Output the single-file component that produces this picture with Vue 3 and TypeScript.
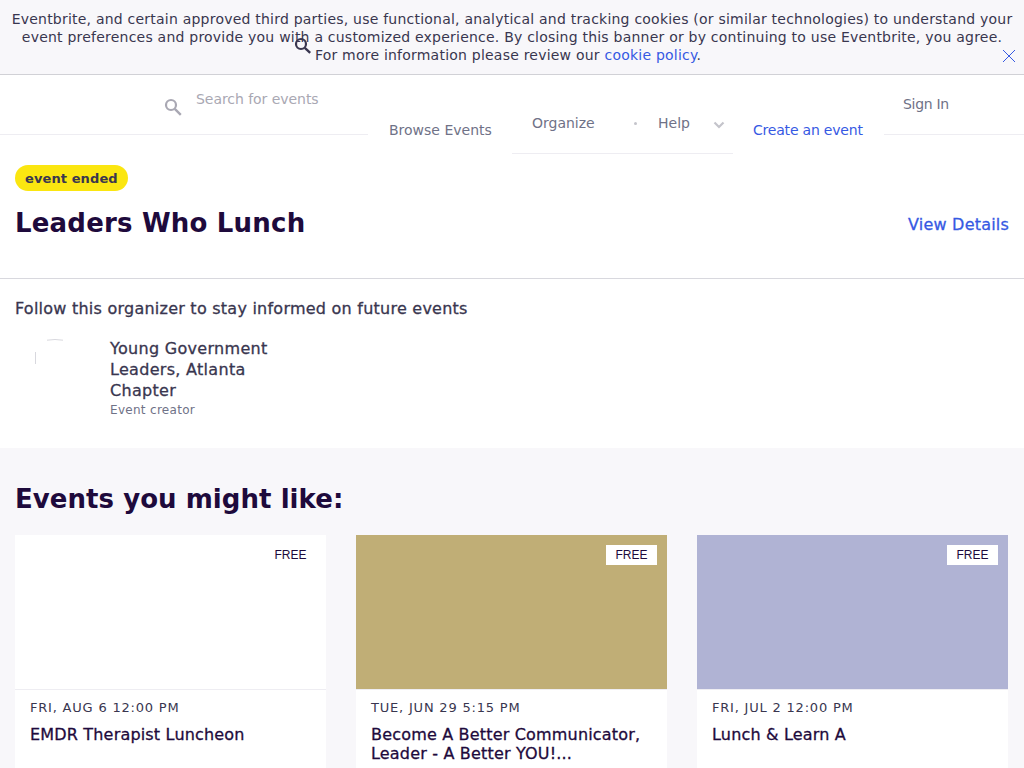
<script setup lang="ts">
interface EventCard {
  date: string
  title: string
  color: string
}

const cards: EventCard[] = [
  { date: 'FRI, AUG 6 12:00 PM', title: 'EMDR Therapist Luncheon', color: '#ffffff' },
  { date: 'TUE, JUN 29 5:15 PM', title: 'Become A Better Communicator, Leader - A Better YOU!...', color: '#c0ae76' },
  { date: 'FRI, JUL 2 12:00 PM', title: 'Lunch & Learn A', color: '#b0b3d4' }
]
</script>

<template>
  <div class="page">
    <div class="banner">
      <p>
        Eventbrite, and certain approved third parties, use functional, analytical and tracking cookies (or similar technologies) to understand your
        event preferences and provide you with a customized experience. By closing this banner or by continuing to use Eventbrite, you agree.
        For more information please review our <a class="link">cookie policy</a>.<span class="trail"></span>
      </p>
      <svg class="close" width="14" height="14" viewBox="0 0 14 14">
        <path d="M1 1l12 12M13 1L1 13" stroke="#3659e3" stroke-width="1" fill="none" />
      </svg>
      <svg class="stray-search" width="18" height="18" viewBox="0 0 18 18">
        <circle cx="7" cy="7" r="5" stroke="#39364f" stroke-width="2.2" fill="none" />
        <path d="M10.800 10.800l5.400 5" stroke="#39364f" stroke-width="2.4" fill="none" />
      </svg>
    </div>

    <header class="header">
      <div class="search">
        <svg class="search-icon" width="18" height="18" viewBox="0 0 18 18">
          <circle cx="7" cy="7" r="5" stroke="#a9a8b3" stroke-width="2.200" fill="none" />
          <path d="M10.800 10.800l6 6" stroke="#a9a8b3" stroke-width="2.400" fill="none" />
        </svg>
        <span class="search-text">Search for events</span>
      </div>
      <a class="nav browse">Browse Events</a>
      <div class="nav-group">
        <a class="nav organize">Organize</a>
        <span class="dot"></span>
        <a class="nav help">Help</a>
        <svg class="chevron" width="12" height="8" viewBox="0 0 12 8">
          <path d="M1.500 1.500L6 6l4.500-4.500" stroke="#c4c4cb" stroke-width="2.200" fill="none" />
        </svg>
      </div>
      <a class="nav create">Create an event</a>
      <a class="nav signin">Sign In</a>
    </header>

    <section class="hero">
      <span class="badge">event ended</span>
      <div class="title-row">
        <h1>Leaders Who Lunch</h1>
        <a class="details">View Details</a>
      </div>
    </section>

    <section class="organizer">
      <h2>Follow this organizer to stay informed on future events</h2>
      <div class="org-row">
        <svg class="avatar" width="40" height="40" viewBox="0 0 40 40">
          <path d="M12 1.200Q20 -.2 28 1.200" stroke="#d8d8de" fill="none" />
          <path d="M.5 13V25" stroke="#d8d8de" fill="none" />
        </svg>
        <div class="org-info">
          <div class="org-name">Young Government Leaders, Atlanta Chapter</div>
          <div class="org-role">Event creator</div>
        </div>
      </div>
    </section>

    <section class="more">
      <h2>Events you might like:</h2>
      <div class="cards">
        <article v-for="card in cards" :key="card.title" class="card">
          <div class="card-image" :style="{ background: card.color }">
            <span class="free">FREE</span>
          </div>
          <div class="card-body">
            <div class="card-date">{{ card.date }}</div>
            <div class="card-title">{{ card.title }}</div>
          </div>
        </article>
      </div>
    </section>
  </div>
</template>

<style>
html, body {
  margin: 0;
  overflow: hidden;
}
</style>

<style scoped>
.page {
  height: 768px;
  overflow: hidden;
  background: #fff;
  font-family: "DejaVu Sans", Verdana, sans-serif;
  color: #39364f;
}

.banner {
  position: relative;
  box-sizing: border-box;
  height: 75px;
  padding: 10px 11px 0;
  background: #f8f7fa;
  border-bottom: 1px solid #d1d1d6;
}

.banner p {
  margin: 0;
  font-size: 14px;
  line-height: 18px;
  letter-spacing: 0.22px;
  text-align: center;
}

.link {
  color: #3659e3;
}

.trail {
  display: inline-block;
  width: 8px;
}

.close {
  position: absolute;
  left: 1002px;
  top: 49px;
}

.stray-search {
  position: absolute;
  left: 294px;
  top: 37px;
}

.header {
  display: flex;
  align-items: flex-start;
  height: 59px;
  border-bottom: 1px solid #eeedf2;
  font-size: 14px;
}

.search {
  display: flex;
  width: 368px;
  box-sizing: border-box;
  padding: 15px 0 0 164px;
}

.search-icon {
  margin: 8px 14px 0 0;
}

.search-text {
  color: #a9a8b3;
  line-height: 18px;
  letter-spacing: -0.05px;
}

.nav {
  color: #6f7287;
  line-height: 18px;
}

.browse {
  width: 144px;
  box-sizing: border-box;
  height: 70px;
  padding: 46px 0 0 21px;
  background: #fff;
}

.nav-group {
  display: flex;
  align-items: flex-start;
  width: 221px;
  height: 79px;
  box-sizing: border-box;
  padding: 39px 0 0 20px;
  background: #fff;
  border-bottom: 1px solid #eeedf2;
}

.organize {
  width: 102px;
}

.dot {
  width: 3px;
  height: 3px;
  margin: 8px 21px 0 0;
  border-radius: 50%;
  background: #c4c4cb;
}

.help {
  width: 55px;
}

.chevron {
  margin-top: 7px;
}

.create {
  width: 151px;
  height: 70px;
  box-sizing: border-box;
  padding: 46px 0 0 20px;
  background: #fff;
  color: #3659e3;
  letter-spacing: -0.2px;
}

.signin {
  margin: 20px 0 0 19px;
  letter-spacing: -0.3px;
}

.hero {
  height: 144px;
  box-sizing: border-box;
  padding: 30px 15px 0;
  border-bottom: 1px solid #d8d8de;
}

.badge {
  display: inline-block;
  height: 26px;
  padding: 0 10px;
  border-radius: 13px;
  background: #fbe610;
  color: #39364f;
  font-size: 13px;
  font-weight: 700;
  line-height: 27px;
  letter-spacing: 0.1px;
}

.title-row {
  display: flex;
  justify-content: space-between;
  align-items: center;
  margin-top: 14px;
}

h1 {
  margin: 0;
  font-size: 26px;
  line-height: 36px;
  font-weight: 700;
  letter-spacing: 0.2px;
  color: #1e0a3c;
}

.details {
  margin-top: 3px;
  color: #3659e3;
  font-size: 16px;
  letter-spacing: 0.2px;
  -webkit-text-stroke: 0.3px #3659e3;
}

.organizer {
  height: 169px;
  box-sizing: border-box;
  padding: 20px 15px 0;
}

.organizer h2 {
  margin: 0;
  font-size: 16px;
  line-height: 20px;
  font-weight: 400;
  letter-spacing: 0.24px;
  -webkit-text-stroke: 0.3px #39364f;
}

.org-row {
  display: flex;
  margin-top: 20px;
  padding-left: 20px;
}

.avatar {
  flex: none;
  margin-right: 35px;
}

.org-info {
  width: 190px;
  margin-top: -1px;
}

.org-name {
  font-size: 16px;
  line-height: 21px;
  letter-spacing: 0.3px;
  -webkit-text-stroke: 0.3px #39364f;
}

.org-role {
  font-size: 12px;
  line-height: 18px;
  letter-spacing: 0.3px;
  color: #6f7287;
}

.more {
  height: 320px;
  box-sizing: border-box;
  padding: 33px 15px 0 15px;
  background: #f8f7fa;
}

.more h2 {
  margin: 0;
  font-size: 26px;
  line-height: 36px;
  font-weight: 700;
  letter-spacing: 0.05px;
  color: #1e0a3c;
}

.cards {
  display: grid;
  grid-template-columns: repeat(3, 311px);
  gap: 30px;
  margin-top: 18px;
}

.card {
  background: #fff;
  height: 300px;
}

.card-image {
  position: relative;
  height: 154px;
  border-bottom: 1px solid #eeedf2;
}

.free {
  position: absolute;
  top: 10px;
  right: 10px;
  width: 51px;
  height: 20px;
  background: #fff;
  color: #1e0a3c;
  font-family: "Liberation Sans", Arial, sans-serif;
  font-size: 12px;
  line-height: 20px;
  text-align: center;
}

.card-body {
  padding: 9px 15px 0;
}

.card-date {
  font-size: 13px;
  line-height: 18px;
  letter-spacing: 0.8px;
  color: #39364f;
}

.card-title {
  margin-top: 8px;
  font-size: 16px;
  line-height: 19px;
  letter-spacing: 0.18px;
  color: #1e0a3c;
  -webkit-text-stroke: 0.3px #1e0a3c;
}
</style>
